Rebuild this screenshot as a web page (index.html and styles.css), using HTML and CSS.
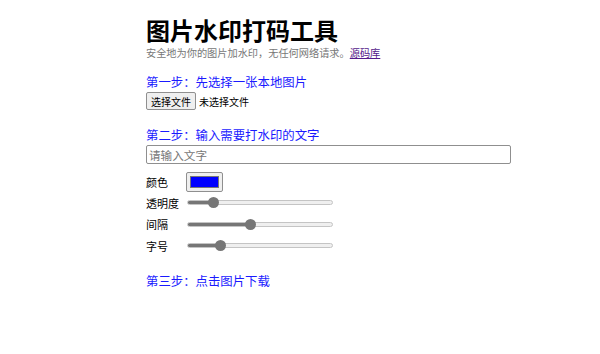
FILE: index.html
```html
<!DOCTYPE html>
<html>

<head>
    <meta charset="UTF-8">
    <title>图片水印打码工具</title>
    <link rel="stylesheet" href="styles.css">
</head>

<body>
    <div id="app">
        <h1 class="title">图片水印打码工具</h1>
        <p class="subtitle">安全地为你的图片加水印，无任何网络请求。<a href="#">源码库</a></p>

        <div class="step">
            <h3 class="stepTitle">第一步：先选择一张本地图片</h3>
            <div class="fileRow">
                <button type="button" class="fileBtn">选择文件</button>
                <span class="fileName">未选择文件</span>
            </div>
        </div>

        <div class="step">
            <h3 class="stepTitle">第二步：输入需要打水印的文字</h3>
            <input type="text" class="textInput" placeholder="请输入文字" />
            <ul class="options">
                <li>
                    <label>颜色</label>
                    <span class="colorBox"><span class="colorSwatch"></span></span>
                </li>
                <li>
                    <label>透明度</label>
                    <input type="range" class="slider" min="0" max="100" value="15" style="--pct: 15%" />
                </li>
                <li>
                    <label>间隔</label>
                    <input type="range" class="slider" min="0" max="100" value="43" style="--pct: 43%" />
                </li>
                <li>
                    <label>字号</label>
                    <input type="range" class="slider" min="0" max="100" value="20" style="--pct: 20%" />
                </li>
            </ul>
        </div>

        <div class="step lastStep">
            <h3 class="stepTitle">第三步：点击图片下载</h3>
        </div>
    </div>
</body>

</html>
```

FILE: styles.css
```css
body {
    margin: 0;
    font-family: "Noto Sans CJK SC", "Noto Sans", sans-serif;
    color: #000;
    background: #fff;
}

#app {
    margin-left: 146px;
    width: 366px;
    padding-top: 17px;
}

.title {
    font-family: "Liberation Sans", "Noto Sans CJK SC", sans-serif;
    font-size: 24px;
    line-height: 30px;
    font-weight: bold;
    margin: 0;
}

.subtitle {
    font-size: 10.2px;
    line-height: 14px;
    color: #777;
    margin: -1px 0 0 0;
}

.subtitle a {
    color: #551a8b;
}

.step {
    margin-top: 13px;
}

.stepTitle {
    font-size: 12.4px;
    line-height: 18px;
    font-weight: normal;
    color: #1a1aff;
    margin: 0;
}

.fileRow {
    display: flex;
    align-items: center;
    margin-top: 1px;
}

.fileBtn {
    font-family: inherit;
    font-size: 10px;
    height: 18px;
    padding: 0 4px;
    border: 1px solid #8f8f8f;
    border-radius: 2px;
    background: #efefef;
    color: #000;
}

.fileName {
    font-size: 10px;
    margin-left: 3px;
}

.step + .step {
    margin-top: 16px;
}

.textInput {
    display: block;
    box-sizing: border-box;
    width: 365px;
    height: 19px;
    margin: 1px 0 0 0;
    padding: 0 2px;
    font-family: inherit;
    font-size: 11.6px;
    border: 1px solid #8f8f8f;
    border-radius: 2px;
}

.textInput::placeholder {
    color: #777;
}

.options {
    list-style-type: none;
    margin: 7px 0 0 0;
    padding: 0;
}

.options li {
    display: flex;
    align-items: center;
    height: 21.3px;
    font-size: 11px;
}

.options label {
    width: 41px;
}

.colorBox {
    box-sizing: border-box;
    width: 37px;
    height: 20px;
    margin-left: -1px;
    padding: 3px 3px;
    border: 1px solid #8f8f8f;
    border-radius: 2px;
    background: #efefef;
}

.colorSwatch {
    display: block;
    height: 100%;
    background: #0000ff;
    border: 1px solid #777;
    box-sizing: border-box;
}

.slider {
    -webkit-appearance: none;
    appearance: none;
    width: 146px;
    height: 11px;
    margin: 0;
    background: transparent;
}

.slider::-webkit-slider-runnable-track {
    height: 5px;
    border-radius: 3px;
    border: 1px solid #c4c4c4;
    box-sizing: border-box;
    background: linear-gradient(to right, #767676 var(--pct), #efefef var(--pct));
}

.slider::-webkit-slider-thumb {
    -webkit-appearance: none;
    width: 11px;
    height: 11px;
    margin-top: -4px;
    border-radius: 50%;
    background: #767676;
}

.lastStep {
    margin-top: 20px;
}
```
